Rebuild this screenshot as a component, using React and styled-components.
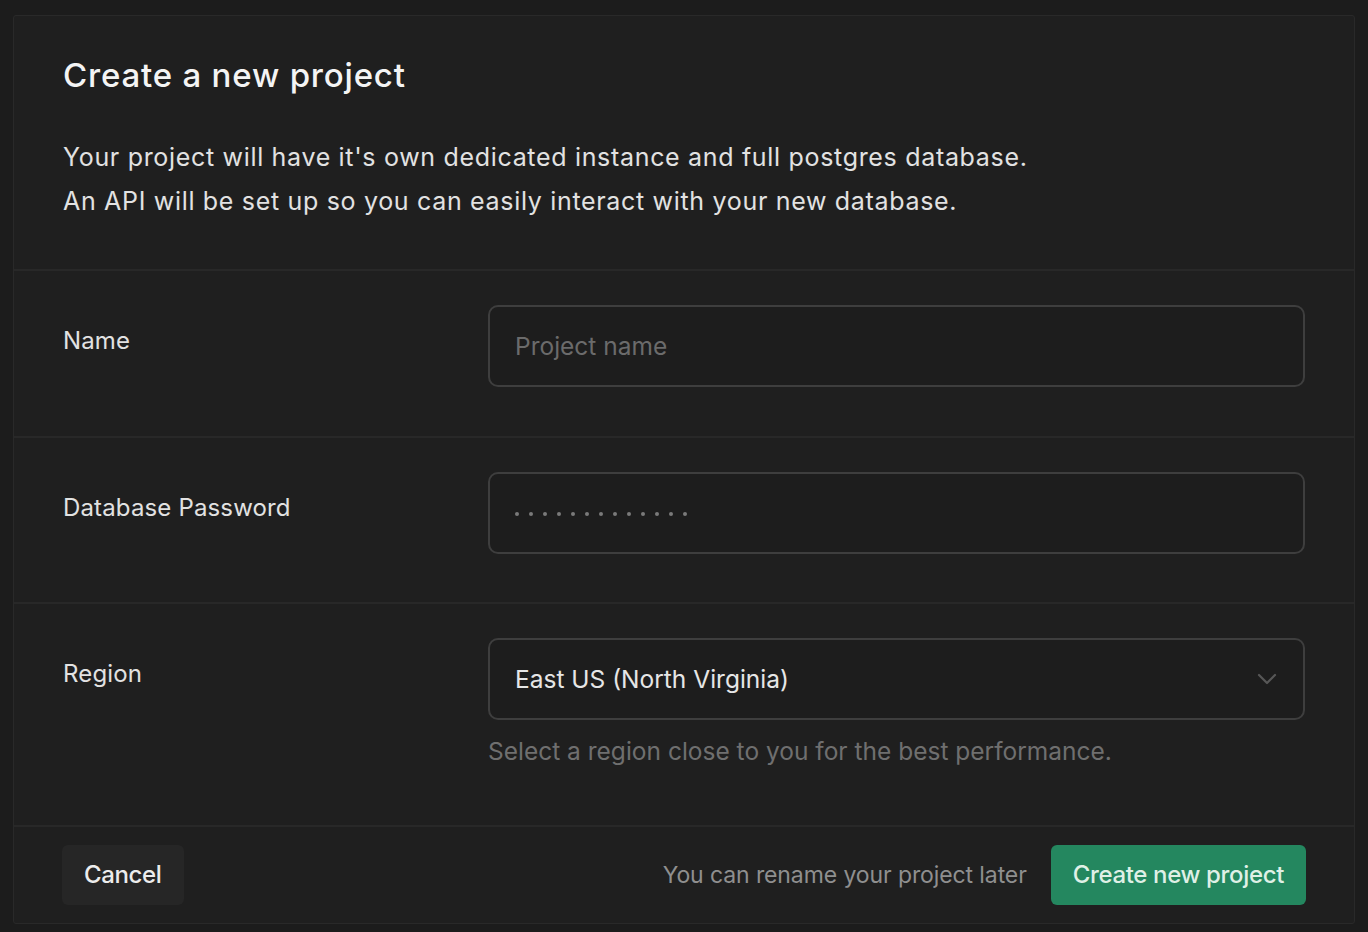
import React from "react";
import styled, { createGlobalStyle } from "styled-components";

const Global = createGlobalStyle`
  html, body { margin: 0; padding: 0; background: #1c1c1c; }
  body { font-family: Inter, "Noto Sans", sans-serif; color: #ededed; }
  * { box-sizing: border-box; }
`;

const Page = styled.div`
  width: 1368px;
  height: 932px;
  padding: 15px 13px 10px 13px;
  background: #1c1c1c;
`;

const Panel = styled.div`
  width: 1342px;
  background: #1f1f1f;
  border: 1px solid #292929;
  border-radius: 3px;
  display: flex;
  flex-direction: column;
`;

const Header = styled.div`
  padding: 36px 49px 46px 49px;
  border-bottom: 2px solid #282828;
`;

const Title = styled.h1`
  margin: 0 0 37px 0;
  font-size: 33px;
  font-weight: 500;
  line-height: 46px;
  color: #f4f4f4;
  letter-spacing: 0.8px;
`;

const Desc = styled.p`
  margin: 0;
  font-size: 25px;
  line-height: 44px;
  color: #e2e2e2;
  letter-spacing: 0.68px;
`;

const Row = styled.div`
  display: grid;
  grid-template-columns: 425px 817px;
  padding: 34px 49px ${(p) => p.$bottom || 48.5}px 49px;
  border-bottom: 2px solid #282828;
`;

const Label = styled.div`
  font-size: 24px;
  line-height: 34px;
  padding-top: 19px;
  color: #e2e2e2;
  letter-spacing: 0.15px;
`;

const Field = styled.div`
  display: flex;
  flex-direction: column;
`;

const Box = styled.div`
  height: 82px;
  border: 2px solid #3e3e3e;
  border-radius: 10px;
  background: #1d1d1d;
  display: flex;
  align-items: center;
  justify-content: space-between;
  padding: 0 26px 0 25px;
  font-size: 24.5px;
  letter-spacing: 0;
  color: ${(p) => p.$color || "#e6e6e6"};
`;

const Dots = styled.span`
  display: flex;
  gap: 10px;
  padding-top: 2px;
  span {
    width: 4px;
    height: 4px;
    border-radius: 50%;
    background: #7a7a7a;
  }
`;

const Help = styled.div`
  margin-top: 16px;
  font-size: 24.5px;
  line-height: 30px;
  color: #6f6f6f;
  letter-spacing: 0;
`;

const Footer = styled.div`
  display: flex;
  align-items: center;
  justify-content: space-between;
  padding: 18px 48px 18px 48px;
`;

const Right = styled.div`
  display: flex;
  align-items: center;
  gap: 24px;
`;

const Note = styled.span`
  font-size: 23px;
  color: #8f8f8f;
  letter-spacing: -0.1px;
`;

const Button = styled.button`
  height: 60px;
  border: none;
  border-radius: 6px;
  padding: 0 22px;
  font-family: inherit;
  font-size: 24px;
  font-weight: 500;
  letter-spacing: -0.35px;
  background: ${(p) => (p.$primary ? "#24875f" : "#262626")};
  color: ${(p) => (p.$primary ? "#dff0e6" : "#ececec")};
  cursor: pointer;
`;

const Chevron = styled.svg`
  flex: none;
`;

export default function App() {
  return (
    <>
      <Global />
      <Page>
        <Panel>
          <Header>
            <Title>Create a new project</Title>
            <Desc>
              Your project will have it's own dedicated instance and full postgres database.
              <br />
              An API will be set up so you can easily interact with your new database.
            </Desc>
          </Header>
          <Row>
            <Label>Name</Label>
            <Field>
              <Box $color="#6b6b6b">Project name</Box>
            </Field>
          </Row>
          <Row>
            <Label>Database Password</Label>
            <Field>
              <Box>
                <Dots>
                  {Array.from({ length: 13 }).map((_, i) => (
                    <span key={i} />
                  ))}
                </Dots>
              </Box>
            </Field>
          </Row>
          <Row $bottom={58.5}>
            <Label>Region</Label>
            <Field>
              <Box>
                <span>East US (North Virginia)</span>
                <Chevron width="20" height="12" viewBox="0 0 20 12" fill="none">
                  <path d="M2 2l8 8 8-8" stroke="#575757" strokeWidth="2.2" strokeLinecap="round" strokeLinejoin="round" />
                </Chevron>
              </Box>
              <Help>Select a region close to you for the best performance.</Help>
            </Field>
          </Row>
          <Footer>
            <Button>Cancel</Button>
            <Right>
              <Note>You can rename your project later</Note>
              <Button $primary>Create new project</Button>
            </Right>
          </Footer>
        </Panel>
      </Page>
    </>
  );
}
